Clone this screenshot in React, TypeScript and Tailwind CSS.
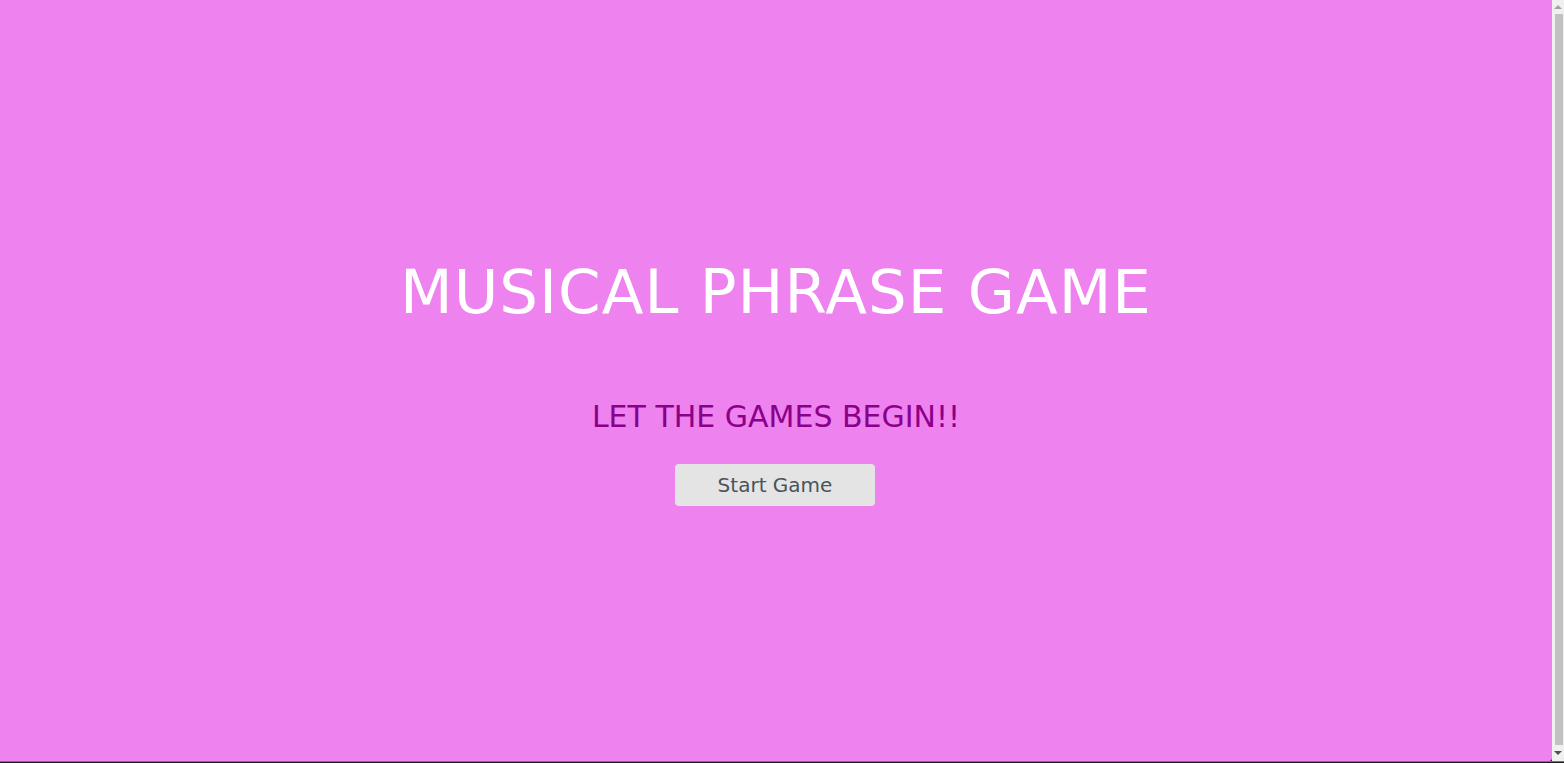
export default function App() {
  return (
    <div className="h-[763px] w-full flex flex-col overflow-hidden bg-[#1b1b1b]">
      <div className="flex flex-1 min-h-0">
        <main className="flex-1 bg-[#ee82ee] flex flex-col items-center font-['DejaVu_Sans',sans-serif] rounded-br-[3px]">
          <h1 className="mt-[261px] text-[61px] leading-none text-white font-normal tracking-[1px]">
            MUSICAL PHRASE GAME
          </h1>
          <h2 className="mt-[80px] text-[30px] leading-none text-[#8b008b] font-normal">
            LET THE GAMES BEGIN!!
          </h2>
          <button className="mt-[32px] mr-[2px] w-[200px] h-[42px] rounded-[4px] bg-[#e4e4e4] text-[#48545a] text-[20px]">
            Start Game
          </button>
        </main>
        <div className="w-[12px] bg-[#f0f0f0] flex flex-col items-center">
          <div className="h-[14px] flex items-center justify-center">
            <div className="w-0 h-0 border-l-[4px] border-r-[4px] border-b-[4px] border-l-transparent border-r-transparent border-b-[#a3a3a3]" />
          </div>
          <div className="flex-1 w-[8px] ml-[2px] bg-[#c1c1c1]" />
          <div className="h-[16px] flex items-center justify-center">
            <div className="w-0 h-0 border-l-[4px] border-r-[4px] border-t-[4px] border-l-transparent border-r-transparent border-t-[#505050]" />
          </div>
        </div>
      </div>
      <div className="h-[1px] bg-[#3a7fd0]" />
      <div className="h-[1px] bg-[#1b1b1b]" />
    </div>
  )
}
